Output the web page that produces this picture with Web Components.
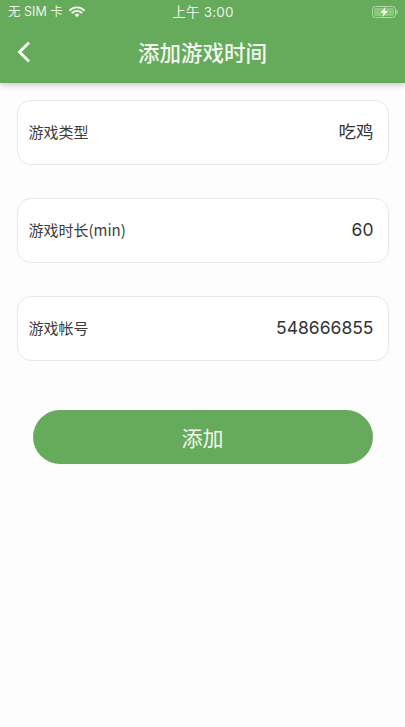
<!DOCTYPE html>
<html lang="zh">
<head>
<meta charset="utf-8">
<title>添加游戏时间</title>
<style>
html,body{margin:0;padding:0;background:#fdfdfd;}
body{width:405px;height:727px;overflow:hidden;font-family:"Noto Sans CJK SC","Roboto",sans-serif;}
</style>
</head>
<body>
<app-header title="添加游戏时间"></app-header>
<main-form>
  <form-row label="游戏类型" value="吃鸡"></form-row>
  <form-row label="游戏时长(min)" value="60"></form-row>
  <form-row label="游戏帐号" value="548666855"></form-row>
  <pill-button>添加</pill-button>
</main-form>
<script>
const FONT='"Noto Sans CJK SC",sans-serif';
const LATIN='Inter,"Noto Sans CJK SC",sans-serif';
class StatusBar extends HTMLElement{
  constructor(){super();this.attachShadow({mode:'open'}).innerHTML=`
  <style>
  :host{display:grid;grid-template-columns:1fr auto 1fr;align-items:center;height:24px;padding:0 7px 0 8px;color:#e9f3e6;font:12.5px/24px ${LATIN};}
  .l{display:flex;align-items:center;gap:6px;}
  .t{font-size:13.5px;letter-spacing:.2px;}
  .r{display:flex;justify-content:flex-end;}
  svg{display:block;}
  </style>
  <div class="l"><span>无 SIM 卡</span>
    <svg width="16" height="12" viewBox="0 0 16 12"><path d="M1 4.2a10 10 0 0 1 14 0M3.4 6.7a6.6 6.6 0 0 1 9.2 0" fill="none" stroke="#f4f9f2" stroke-width="1.9" stroke-linecap="round"/><path d="M5.6 8.8a3.3 3.3 0 0 1 4.8 0L8 11.2z" fill="#f4f9f2"/></svg>
  </div>
  <div class="t">上午 3:00</div>
  <div class="r">
    <svg width="26" height="12" viewBox="0 0 26 12"><rect x=".5" y=".5" width="23" height="11" rx="3" fill="none" stroke="#b9d6b1" stroke-width="1"/><rect x="2" y="2" width="20" height="8" rx="1.5" fill="#86cc76"/><rect x="24.4" y="4" width="1.3" height="4" rx=".6" fill="#b9d6b1"/><path d="M13.8 .8 8.6 6.8h3.2l-1.4 4.4 5.4-6.2h-3.3z" fill="#fff"/></svg>
  </div>`;}
}
customElements.define('status-bar',StatusBar);

class AppHeader extends HTMLElement{
  constructor(){super();this.attachShadow({mode:'open'}).innerHTML=`
  <style>
  :host{display:block;height:83px;background:#66aa5c;box-shadow:0 2px 6px rgba(0,0,0,.22);position:relative;z-index:1;}
  .bar{display:grid;grid-template-columns:48px 1fr 48px;align-items:center;height:55px;}
  .back{display:flex;justify-content:flex-start;padding-left:17px;}
  h1{margin:0;text-align:center;color:#f1f7ef;font:500 21.5px/29px ${FONT};}
  svg{display:block;}
  </style>
  <status-bar></status-bar>
  <div class="bar">
    <div class="back"><svg width="14" height="22" viewBox="0 0 14 22"><path d="M12 1.5 2.6 11 12 20.5" fill="none" stroke="#f4f9f2" stroke-width="3"/></svg></div>
    <h1></h1><div></div>
  </div>`;
  this.shadowRoot.querySelector('h1').textContent=this.getAttribute('title');}
}
customElements.define('app-header',AppHeader);

class MainForm extends HTMLElement{
  constructor(){super();this.attachShadow({mode:'open'}).innerHTML=`
  <style>
  :host{display:flex;flex-direction:column;gap:33px;padding:16.5px 16.5px 0;}
  </style><slot></slot>`;}
}
customElements.define('main-form',MainForm);

class FormRow extends HTMLElement{
  constructor(){super();this.attachShadow({mode:'open'}).innerHTML=`
  <style>
  :host{display:flex;align-items:center;justify-content:space-between;box-sizing:border-box;height:65px;padding:0 14px 0 11px;border:1.5px solid #e8e8e8;border-radius:14px;background:#fff;}
  .k{font:15px/20px ${FONT};color:#3c3c3c;}
  .v{font:17.5px/24px ${LATIN};color:#333;}
  </style><span class="k"></span><span class="v"></span>`;
  this.shadowRoot.querySelector('.k').textContent=this.getAttribute('label');
  this.shadowRoot.querySelector('.v').textContent=this.getAttribute('value');}
}
customElements.define('form-row',FormRow);

class PillButton extends HTMLElement{
  constructor(){super();this.attachShadow({mode:'open'}).innerHTML=`
  <style>
  :host{display:flex;align-items:center;justify-content:center;height:54px;margin:16px 16px 0;border-radius:27px;background:#66aa5c;color:#f1f8ee;font:21px/28px ${FONT};}
  </style><slot></slot>`;}
}
customElements.define('pill-button',PillButton);
</script>
</body>
</html>
